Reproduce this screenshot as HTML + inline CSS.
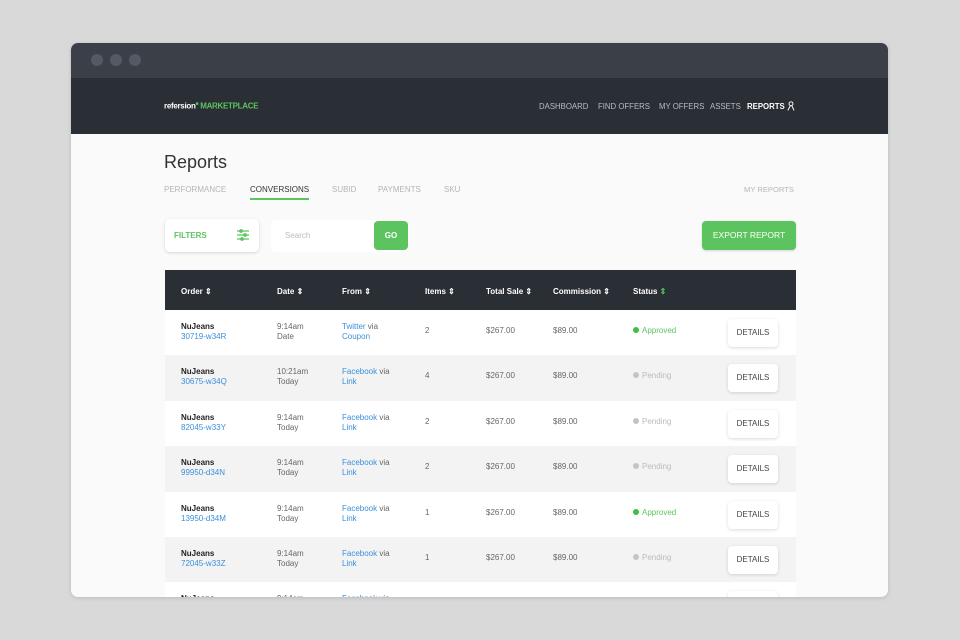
<!DOCTYPE html>
<html><head><meta charset="utf-8">
<style>
*{margin:0;padding:0;box-sizing:border-box}
body{width:960px;height:640px;background:#d9d9d9;font-family:"Liberation Sans",sans-serif;position:relative;overflow:hidden}
.win{position:absolute;left:71px;top:43px;width:817px;height:554px;border-radius:7px;overflow:hidden;background:#fafafa;box-shadow:0 1px 4px rgba(0,0,0,.15)}
.tb{position:absolute;left:0;top:0;width:100%;height:35px;background:#3a3f48}
.dot{position:absolute;top:11px;width:12px;height:12px;border-radius:50%;background:#545a63}
.nav{position:absolute;left:0;top:35px;width:100%;height:56px;background:#2a2e35}
.a{position:absolute;white-space:nowrap}
.logo{left:93px;top:23px;font-size:8px;font-weight:bold;color:#fff;letter-spacing:-.3px}
.logo span{color:#5cc45f}
.nl{top:24px;font-size:7.8px;color:#b8bcc2}
.tab{top:142px;font-size:8px;color:#b5b5b5}
.tr{position:absolute;left:94px;width:631px;height:45.5px}
.c{position:absolute;font-size:8px;line-height:10px;color:#666}
.b{color:#222;font-weight:bold}
.l{color:#3a8fdc}
.det{position:absolute;left:563px;width:50px;height:28px;background:#fff;border-radius:4px;box-shadow:0 1px 3px rgba(0,0,0,.15);font-size:8px;color:#444;text-align:center;line-height:28px}
.st{position:absolute;font-size:8px}
.st i{display:inline-block;width:6px;height:6px;border-radius:50%;margin-right:3px;vertical-align:0}
.th{position:absolute;top:17px;font-size:8px;font-weight:bold;color:#fff}
</style></head><body>
<div class="win">
<div class="tb"><div class="dot" style="left:20px"></div><div class="dot" style="left:39px"></div><div class="dot" style="left:58px"></div></div>
<div class="nav">
<div class="a logo">refersion<sup style="font-size:5px;color:#5cc45f">■</sup> <span>MARKETPLACE</span></div>
<div class="a nl" style="left:468px">DASHBOARD</div>
<div class="a nl" style="left:527px">FIND OFFERS</div>
<div class="a nl" style="left:588px">MY OFFERS</div>
<div class="a nl" style="left:639px">ASSETS</div>
<div class="a nl" style="left:676px;color:#fff;font-weight:bold">REPORTS</div>
<svg class="a" style="left:716px;top:23px" width="8" height="10" viewBox="0 0 9 11"><circle cx="4.5" cy="3" r="2.2" fill="none" stroke="#fff" stroke-width="1.1"/><path d="M1 10.5 L3.5 5.5 M8 10.5 L5.5 5.5" stroke="#fff" stroke-width="1.1" fill="none"/></svg>
</div>
<div class="a" style="left:93px;top:109px;font-size:18px;color:#333">Reports</div>
<div class="a tab" style="left:93px">PERFORMANCE</div>
<div class="a tab" style="left:179px;color:#333">CONVERSIONS</div>
<div class="a" style="left:179px;top:155px;width:59px;height:1.5px;background:#5cc45f"></div>
<div class="a tab" style="left:307px;left:261px">SUBID</div>
<div class="a tab" style="left:307px">PAYMENTS</div>
<div class="a tab" style="left:373px">SKU</div>
<div class="a tab" style="left:673px;font-size:7.6px">MY REPORTS</div>

<div class="a" style="left:94px;top:176px;width:94px;height:33px;background:#fff;border-radius:5px;box-shadow:0 1px 3px rgba(0,0,0,.15)"></div>
<div class="a" style="left:103px;top:188px;font-size:8px;font-weight:bold;color:#5cc45f">FILTERS</div>
<svg class="a" style="left:166px;top:186px" width="12" height="12" viewBox="0 0 12 12" stroke="#5cc45f" stroke-width="1.2"><path d="M0 2h12M0 6h12M0 10h12"/><circle cx="4" cy="2" r="1.3" fill="#5cc45f"/><circle cx="8" cy="6" r="1.3" fill="#5cc45f"/><circle cx="5" cy="10" r="1.3" fill="#5cc45f"/></svg>
<div class="a" style="left:200px;top:177px;width:138px;height:32px;background:#fff;border-radius:5px"></div>
<div class="a" style="left:214px;top:188px;font-size:8px;color:#bbb">Search</div>
<div class="a" style="left:303px;top:178px;width:34px;height:29px;background:#5cc45f;border-radius:4px;color:#fff;font-size:8px;font-weight:bold;text-align:center;line-height:29px">GO</div>
<div class="a" style="left:631px;top:178px;width:94px;height:29px;background:#5cc45f;border-radius:4px;color:#fff;font-size:8.5px;text-align:center;line-height:29px;box-shadow:0 1px 2px rgba(0,0,0,.15)">EXPORT REPORT</div>

<div class="a" style="left:94px;top:227px;width:631px;height:40px;background:#2a2e35">
<div class="th" style="left:16px">Order ⇕</div>
<div class="th" style="left:112px">Date ⇕</div>
<div class="th" style="left:177px">From ⇕</div>
<div class="th" style="left:260px">Items ⇕</div>
<div class="th" style="left:321px">Total Sale ⇕</div>
<div class="th" style="left:388px">Commission ⇕</div>
<div class="th" style="left:468px">Status <span style="color:#5cc45f">⇕</span></div>
</div>
<div id="rows"></div>
</div>
<script>
var d=[["30719-w34R","9:14am","Date","Twitter","Coupon","2",1],["30675-w34Q","10:21am","Today","Facebook","Link","4",0],["82045-w33Y","9:14am","Today","Facebook","Link","2",0],["99950-d34N","9:14am","Today","Facebook","Link","2",0],["13950-d34M","9:14am","Today","Facebook","Link","1",1],["72045-w33Z","9:14am","Today","Facebook","Link","1",0],["72045-w33Z","9:14am","Today","Facebook","Link","1",0]];
var h="";d.forEach(function(r,i){var t=267+i*45.4;
h+='<div class="tr" style="top:'+t+'px;background:'+(i%2?'#f3f3f3':'#fff')+'">'+
'<div class="c" style="left:16px;top:12px"><span class="b">NuJeans</span><br><span class="l">'+r[0]+'</span></div>'+
'<div class="c" style="left:112px;top:12px">'+r[1]+'<br>'+r[2]+'</div>'+
'<div class="c" style="left:177px;top:12px"><span class="l">'+r[3]+'</span> via<br><span class="l">'+r[4]+'</span></div>'+
'<div class="c" style="left:260px;top:16px">'+r[5]+'</div>'+
'<div class="c" style="left:321px;top:16px">$267.00</div>'+
'<div class="c" style="left:388px;top:16px">$89.00</div>'+
'<div class="st" style="left:468px;top:16px;color:'+(r[6]?'#5cc45f':'#bbb')+'"><i style="background:'+(r[6]?'#3fbf45':'#c4c4c4')+'"></i>'+(r[6]?'Approved':'Pending')+'</div>'+
'<div class="det" style="top:9px">DETAILS</div></div>';});
document.getElementById('rows').innerHTML=h;
</script>
</body></html>
